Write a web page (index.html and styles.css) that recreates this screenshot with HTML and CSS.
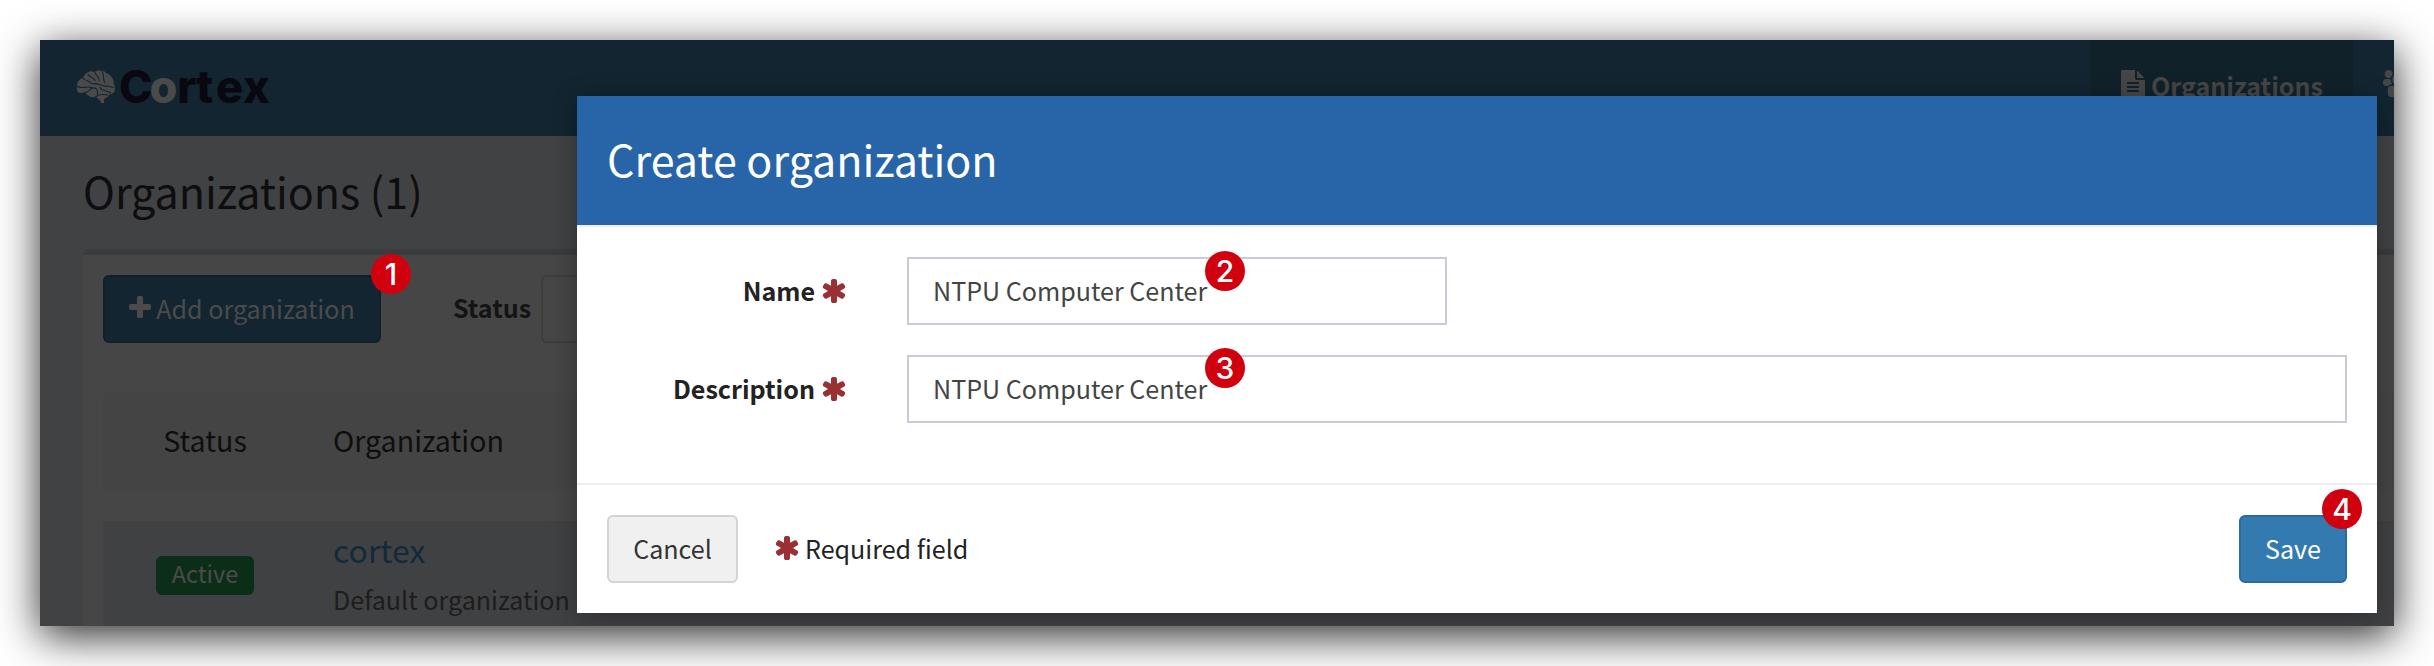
FILE: index.html
```html
<!DOCTYPE html>
<html lang="en">
<head>
<meta charset="utf-8">
<title>Cortex</title>
<link rel="stylesheet" href="styles.css">
</head>
<body>
<svg class="defs" width="0" height="0" aria-hidden="true">
  <symbol id="plus" viewBox="0 0 1792 1792"><path d="M1600 736v192q0 40-28 68t-68 28h-416v416q0 40-28 68t-68 28h-192q-40 0-68-28t-28-68v-416h-416q-40 0-68-28t-28-68v-192q0-40 28-68t68-28h416v-416q0-40 28-68t68-28h192q40 0 68 28t28 68v416h416q40 0 68 28t28 68z"/></symbol>
  <symbol id="asterisk" viewBox="0 0 1792 1792"><path d="M1546 1050q46 26 59.5 77.5t-12.5 97.5l-64 110q-26 46-77.5 59.5t-97.5-12.5l-266-153v307q0 52-38 90t-90 38h-128q-52 0-90-38t-38-90v-307l-266 153q-46 26-97.5 12.5t-77.5-59.5l-64-110q-26-46-12.5-97.5t59.5-77.5l266-154-266-154q-46-26-59.5-77.5t12.5-97.5l64-110q26-46 77.5-59.5t97.5 12.5l266 153v-307q0-52 38-90t90-38h128q52 0 90 38t38 90v307l266-153q46-26 97.5-12.5t77.5 59.5l64 110q26 46 12.5 97.5t-59.5 77.5l-266 154z"/></symbol>
  <symbol id="file" viewBox="0 0 1792 1792"><path d="M1596 476q14 14 28 36h-472v-472q22 14 36 28zm-476 164h544v1056q0 40-28 68t-68 28h-1344q-40 0-68-28t-28-68v-1600q0-40 28-68t68-28h800v544q0 40 28 68t68 28zm160 736v-64q0-14-9-23t-23-9h-704q-14 0-23 9t-9 23v64q0 14 9 23t23 9h704q14 0 23-9t9-23zm0-256v-64q0-14-9-23t-23-9h-704q-14 0-23 9t-9 23v64q0 14 9 23t23 9h704q14 0 23-9t9-23zm0-256v-64q0-14-9-23t-23-9h-704q-14 0-23 9t-9 23v64q0 14 9 23t23 9h704q14 0 23-9t9-23z"/></symbol>
</svg>
<div class="window">
  <header class="navbar">
    <svg class="logo" width="200" height="76" viewBox="0 -16 200 76">
      <path class="brain" d="M1 24C0 18 2 13 7 12C9 7 14 4 18 6C22 4 28 4 30 7C35 9 38 13 38 18C40 23 39 28 34 28C32 30 31 32 28 33L28 37L25 37C25 34 22 33 20 31C15 32 11 30 9 26C5 28 1 27 1 24Z"/>
      <path class="folds" d="M1 20C5 24 10 19 17 22M7 12C10 16 13 14 16 18M12 8C13 12 19 11 19 15M19 6C19 10 24 10 23 15M26 5C29 10 26 13 29 17M16 18C22 16 25 21 31 20C34 20 36 22 38 21M9 26C13 27 13 23 17 22C21 21 23 26 21 31M24 21C25 25 30 24 35 27M19 31C23 28 27 28 32 29"/>
      <text class="word" y="37" x="43 73.500 101.200 120 140 167"><tspan>C</tspan><tspan class="o">o</tspan><tspan>rtex</tspan></text>
    </svg>
    <nav class="nav">
      <a class="tab active"><svg class="icon"><use href="#file"/></svg><span>Organizations</span></a>
      <a class="tab"><svg class="users" width="30" height="28" viewBox="0 0 30 28"><circle cx="5.700" cy="4" r="3.900"/><rect x="0" y="9" width="9" height="7" rx="3"/><circle class="cut" cx="15" cy="9.500" r="6.600"/><rect class="cut" x="4" y="15" width="22" height="13" rx="4.500"/></svg></a>
    </nav>
  </header>
  <main class="content">
    <h1 class="title">Organizations (1)</h1>
    <section class="box">
      <div class="toolbar">
        <button class="btn add"><svg class="icon"><use href="#plus"/></svg>Add organization</button>
        <b class="filter">Status</b>
        <div class="select"></div>
      </div>
      <div class="thead"><span class="c1">Status</span><span>Organization</span></div>
      <div class="row">
        <span class="c1"><span class="tag">Active</span></span>
        <div><div class="name">cortex</div><div class="desc">Default organization</div></div>
      </div>
    </section>
  </main>
  <div class="modal">
    <h2 class="modal-head">Create organization</h2>
    <div class="modal-body">
      <label class="field"><span class="label">Name <svg class="icon req"><use href="#asterisk"/></svg></span><span class="input short">NTPU Computer Center</span></label>
      <label class="field"><span class="label">Description <svg class="icon req"><use href="#asterisk"/></svg></span><span class="input">NTPU Computer Center</span></label>
    </div>
    <div class="modal-foot">
      <button class="btn cancel">Cancel</button>
      <span class="note"><svg class="icon req"><use href="#asterisk"/></svg>Required field</span>
      <button class="btn save">Save</button>
    </div>
  </div>
  <span class="badge b1">1</span>
  <span class="badge b2">2</span>
  <span class="badge b3">3</span>
  <span class="badge b4">4</span>
</div>
</body>
</html>
```
FILE: styles.css
```css
* { box-sizing: border-box; }
body {
  margin: 0;
  padding: 40px;
  height: 666px;
  overflow: hidden;
  background: #fff;
  font: 25.080px/40px "Noto Sans CJK SC", "Noto Sans CJK JP", sans-serif;
}
.defs { position: absolute; }
.window {
  position: relative;
  width: 2354px;
  height: 586px;
  overflow: hidden;
  background: #414244;
  box-shadow: 0 10px 40px rgba(0, 0, 0, .83);
}
.icon { width: 28px; height: 28px; flex: none; fill: currentColor; }

.navbar { display: flex; justify-content: space-between; height: 96px; background: #122531; }
.logo { margin: 10px 0 0 36px; }
.brain { fill: #4a4a4a; }
.folds { fill: none; stroke: #122531; stroke-width: 1.1; }
.word { font: 800 45px Inter, sans-serif; fill: #090810; }
.word .o { fill: #4a4a4a; }
.nav { display: flex; width: 303px; overflow: hidden; }
.tab { display: flex; flex: none; align-items: center; color: #464646; font-weight: 700; }
.tab.active { width: 262px; padding-left: 28px; gap: 4px; background: #11212a; }
.tab.active .icon { margin-bottom: 8px; }
.tab.active span { padding-bottom: 6px; }
.tab .users { margin: 0 0 8px 30px; fill: #464646; }
.cut { stroke: #122531; stroke-width: 1.500; }

.content { padding: 24px 0 0 43px; }
.title { margin: 0; font-size: 43px; font-weight: 400; line-height: 60px; color: #0e0e0e; }
.box { height: 400px; margin-top: 29px; padding: 20px 0 0 20px; border-top: 6px solid #393b3d; border-radius: 6px 0 0 0; background: #464646; }
.toolbar { display: flex; align-items: center; height: 68px; }
.btn { display: flex; align-items: center; justify-content: center; height: 68px; padding: 0 0 2px; border: 2px solid; border-radius: 6px; font: inherit; }
.add { width: 278px; padding-right: 3px; gap: 2px; border-color: #10202b; background: #122531; color: #4b4b4b; }
.filter { width: 88px; margin-left: 72px; padding-bottom: 4px; color: #141414; }
.select { width: 400px; height: 68px; border: 2px solid #3d3d3d; border-radius: 6px; }
.thead { display: flex; align-items: center; height: 98px; margin-top: 50px; padding-bottom: 4px; background: #444; color: #0e0e0e; font-size: 28.600px; }
.c1 { display: flex; justify-content: center; width: 204px; margin-right: 26px; }
.row { display: flex; align-items: flex-start; height: 130px; margin-top: 30px; background: #404143; }
.row .c1 { padding-top: 35px; }
.tag { width: 98px; height: 39px; border-radius: 6px; background: #0c2e18; color: #4b4b4b; font-size: 23.500px; line-height: 34px; text-align: center; }
.name { padding-top: 7px; color: #122a3b; font-size: 32px; line-height: 42px; }
.desc { padding-top: 9px; color: #1d1d1d; }

.modal { position: absolute; left: 537px; top: 56px; width: 1800px; height: 517px; background: #fff; box-shadow: 0 4px 24px rgba(0, 0, 0, .3); color: #222; }
.modal-head { height: 129px; margin: 0; padding: 0 30px; background: #2865a8; color: #fff; font-size: 43px; font-weight: 400; line-height: 125px; }
.modal-body { display: flex; flex-direction: column; gap: 30px; height: 260px; padding: 30px 30px 0 0; border: solid #eee; border-width: 2px 0; }
.field { display: flex; align-items: center; }
.label { display: flex; align-items: center; justify-content: flex-end; gap: 5px; width: 271px; margin-right: 59px; padding-bottom: 2px; font-weight: 700; }
.label .req { margin-top: 2px; }
.req { color: #993033; }
.input { flex: 1; height: 68px; padding-left: 24px; border: 2px solid #c8ccd8; color: #444; line-height: 62px; }
.input.short { flex: none; width: 540px; }
.modal-foot { display: flex; align-items: center; padding: 30px; }
.cancel { width: 131px; border-color: #d3d3d3; background: #f0f0f0; color: #333; }
.note { display: flex; align-items: center; gap: 4px; margin-left: 35px; padding-bottom: 2px; }
.save { width: 108px; margin-left: auto; border-color: #2b6a9c; background: #337ab0; color: #fff; }

.badge { position: absolute; width: 40px; height: 40px; border-radius: 50%; background: #d0000f; color: #fff; font: 500 30px/40px Inter, sans-serif; text-align: center; }
.b1 { left: 331px; top: 214px; }
.b2 { left: 1165px; top: 211px; }
.b3 { left: 1165px; top: 308px; }
.b4 { left: 2282px; top: 449px; }
```
